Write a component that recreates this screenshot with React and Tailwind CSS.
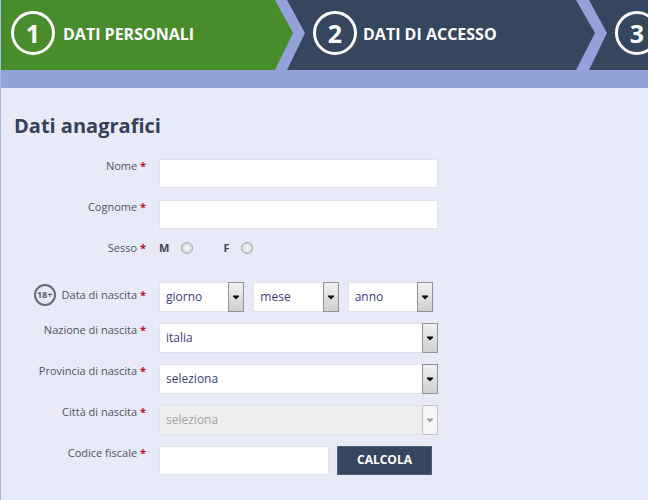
import React from 'react';

const StepNumber = ({ children }) => (
  <span className="flex items-center justify-center w-11 h-11 shrink-0 rounded-full border-[3px] border-white text-[25px] leading-7 font-bold">
    {children}
  </span>
);

const Label = ({ htmlFor, children }) => (
  <label htmlFor={htmlFor} className="text-[11px] leading-[14px] text-[#4f5563] whitespace-nowrap">
    {children} <span className="text-[#b80f35] font-bold">*</span>
  </label>
);

const Row = ({ id, label, children }) => (
  <div className="flex gap-[13px]">
    <div className="w-[131px] shrink-0 flex justify-end items-start">
      <Label htmlFor={id}>{label}</Label>
    </div>
    <div className="h-[29px] flex flex-1 max-w-[279px]">{children}</div>
  </div>
);

const TextInput = ({ id, className }) => (
  <input
    id={id}
    type="text"
    className={`h-[29px] min-w-0 px-2 bg-white border border-[#e2e3ea] text-[12px] text-[#34365f] focus:outline-none ${className}`}
  />
);

const Select = ({ id, label, option, disabled }) => (
  <div className="relative flex-1 h-[30px]">
    <select
      id={id}
      aria-label={label}
      disabled={disabled}
      className="appearance-none w-full h-full pl-1.5 pr-5 border border-[#e2e3ea] bg-white text-[12px] leading-4 text-[#3c3d78] disabled:bg-[#eeeeee] disabled:text-[#a3a3a3] disabled:opacity-100"
    >
      <option>{option}</option>
    </select>
    <span
      className={`pointer-events-none absolute right-0 top-0 flex items-center justify-center w-4 h-full border ${
        disabled
          ? 'border-[#c3c3c3] bg-[#f5f5f5] text-[#a3a3a3]'
          : 'border-[#929398] bg-linear-to-b from-[#f1f1f1] to-[#cfcfcf] text-black'
      }`}
    >
      <svg width="8" height="5" viewBox="0 0 8 5" fill="currentColor">
        <path d="M1 0.5h6v1L4 4.5 1 1.5z" />
      </svg>
    </span>
  </div>
);

const Radio = ({ id }) => (
  <input
    id={id}
    type="radio"
    name="sesso"
    className="appearance-none w-3 h-3 rounded-full border border-[#a0a3aa] bg-radial from-white to-[#c4c6ca] checked:to-[#35465e]"
  />
);

const App = () => {
  return (
    <div className="min-h-screen flex flex-col border-l border-[#aebbe6] bg-[#e8ebf7] font-['Open_Sans',sans-serif]">
      {/* Registration steps */}
      <ol className="flex overflow-hidden bg-[#93a3da] pb-[18px] text-white text-[16px] leading-6 font-bold whitespace-nowrap">
        <li className="flex items-center gap-2 w-[292px] h-[70px] pl-2.5 pb-1 shrink-0 bg-[#488c2b] [clip-path:polygon(0_0,274px_0,100%_33px,274px_100%,0_100%)]">
          <StepNumber>1</StepNumber>
          <span className="pt-0.5">DATI PERSONALI</span>
        </li>
        <li className="flex items-center gap-1.5 w-[308px] h-[70px] -ml-[6px] pl-[26px] pb-1 shrink-0 bg-[#35465e] [clip-path:polygon(0_0,289px_0,100%_33px,289px_100%,0_100%,18px_33px)]">
          <StepNumber>2</StepNumber>
          <span className="pt-0.5">DATI DI ACCESSO</span>
        </li>
        <li className="flex items-center w-[308px] h-[70px] -ml-[6px] pl-[26px] pb-1 shrink-0 bg-[#35465e] [clip-path:polygon(0_0,289px_0,100%_33px,289px_100%,0_100%,18px_33px)]">
          <StepNumber>3</StepNumber>
        </li>
      </ol>

      <form className="flex-1 px-3.5 pt-6 pb-6">
        <h1 className="mb-[19px] -ml-px text-[20px] leading-7 font-bold text-[#35425a]">Dati anagrafici</h1>

        <div className="flex flex-col gap-3">
          <Row id="nome" label="Nome">
            <TextInput id="nome" className="flex-1" />
          </Row>
          <Row id="cognome" label="Cognome">
            <TextInput id="cognome" className="flex-1" />
          </Row>

          <Row id="sesso-m" label="Sesso">
            <div className="flex items-center gap-3 h-3.5 text-[11px] leading-[14px] font-bold text-[#3f4656]">
              <label htmlFor="sesso-m">M</label>
              <Radio id="sesso-m" />
              <label htmlFor="sesso-f" className="ml-[18px]">F</label>
              <Radio id="sesso-f" />
            </div>
          </Row>

          {/* Birth date, adults only */}
          <div className="flex gap-[13px] h-[29px]">
            <div className="w-[131px] shrink-0 flex items-center justify-end gap-1.5 h-[26px]">
              <span className="flex items-center justify-center w-[22px] h-[22px] rounded-full border-2 border-[#666b78] text-[9px] leading-3 font-bold text-[#555b68]">
                18+
              </span>
              <Label htmlFor="giorno">Data di nascita</Label>
            </div>
            <div className="flex flex-1 gap-[9px] max-w-[274px]">
              <Select id="giorno" option="giorno" />
              <Select id="mese" label="Mese di nascita" option="mese" />
              <Select id="anno" label="Anno di nascita" option="anno" />
            </div>
          </div>

          <Row id="nazione" label="Nazione di nascita">
            <Select id="nazione" option="italia" />
          </Row>
          <Row id="provincia" label="Provincia di nascita">
            <Select id="provincia" option="seleziona" />
          </Row>
          <Row id="citta" label="Città di nascita">
            <Select id="citta" option="seleziona" disabled />
          </Row>

          <Row id="codice" label="Codice fiscale">
            <TextInput id="codice" className="w-[170px]" />
            <button
              type="button"
              className="ml-2 w-[95px] h-[29px] pb-0.5 border border-[#4d5f79] bg-[#35465e] text-white text-[12px] leading-4 font-bold"
            >
              CALCOLA
            </button>
          </Row>
        </div>
      </form>
    </div>
  );
};

export default App;
